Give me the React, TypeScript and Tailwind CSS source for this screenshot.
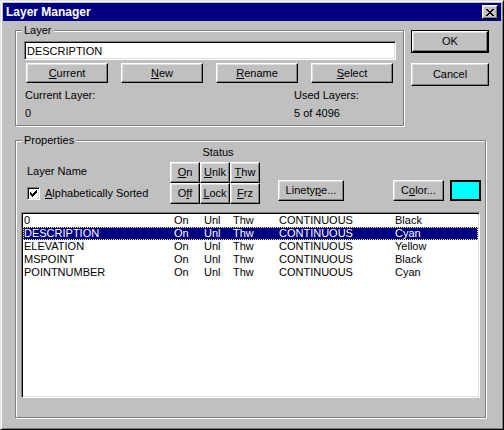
import React from 'react';

const raised =
  'bg-[#c0c0c0] border border-t-white border-l-white border-b-black border-r-black shadow-[inset_-1px_-1px_#808080,inset_1px_1px_#dfdfdf]';
const sunken =
  'border border-t-[#808080] border-l-[#808080] border-b-white border-r-white shadow-[inset_1px_1px_#000,inset_-1px_-1px_#dfdfdf]';
const groupBox =
  'relative border border-[#808080] shadow-[1px_1px_#fff,inset_1px_1px_#fff]';

function Btn({ className, children }: { className: string; children: React.ReactNode }) {
  return (
    <button className={`${raised} flex items-center justify-center ${className}`}>
      {children}
    </button>
  );
}

const layers = [
  { name: '0', color: 'Black' },
  { name: 'DESCRIPTION', color: 'Cyan', selected: true },
  { name: 'ELEVATION', color: 'Yellow' },
  { name: 'MSPOINT', color: 'Black' },
  { name: 'POINTNUMBER', color: 'Cyan' },
];

export default function App() {
  return (
    <div className="w-[504px] h-[430px] bg-[#c0c0c0] border border-t-[#dfdfdf] border-l-[#dfdfdf] border-b-black border-r-black shadow-[inset_1px_1px_#fff,inset_-1px_-1px_#808080] p-[2px] flex flex-col font-['Liberation_Sans',Arial,sans-serif] text-[11px] leading-[13px] text-black select-none">
      {/* Title bar */}
      <div className="h-[18px] bg-[#000080] flex items-center justify-between pl-[3px] pr-[3px]">
        <span className="text-white font-bold text-[12px]">Layer Manager</span>
        <button className={`${raised} w-[16px] h-[14px] flex items-center justify-center`}>
          <svg width="8" height="7" viewBox="0 0 8 7" shapeRendering="crispEdges">
            <path
              fill="#000"
              d="M0 0h2v1H0zM6 0h2v1H6zM1 1h2v1H1zM5 1h2v1H5zM2 2h4v1H2zM3 3h2v1H3zM2 4h4v1H2zM1 5h2v1H1zM5 5h2v1H5zM0 6h2v1H0zM6 6h2v1H6z"
            />
          </svg>
        </button>
      </div>

      <div className="flex flex-col pl-[12px]">
        {/* Top row: Layer group + OK/Cancel */}
        <div className="flex items-start mt-[9px]">
          <div className={`${groupBox} w-[389px] h-[96px] pt-[10px] pl-[8px]`}>
            <span className="absolute left-[6px] top-[-7px] px-[2px] bg-[#c0c0c0]">Layer</span>
            <input
              readOnly
              defaultValue="DESCRIPTION"
              className={`${sunken} bg-white w-[372px] h-[19px] pl-[2px] outline-none text-[11px]`}
            />
            <div className="flex gap-[13px] mt-[3px] ml-[2px]">
              <Btn className="w-[82px] h-[20px]">
                <span><u>C</u>urrent</span>
              </Btn>
              <Btn className="w-[82px] h-[20px]">
                <span><u>N</u>ew</span>
              </Btn>
              <Btn className="w-[82px] h-[20px]">
                <span><u>R</u>ename</span>
              </Btn>
              <Btn className="w-[82px] h-[20px]">
                <span><u>S</u>elect</span>
              </Btn>
            </div>
            <div className="grid grid-cols-[269px_1fr] ml-[1px] mt-[6px] gap-y-[5px]">
              <span>Current Layer:</span>
              <span>Used Layers:</span>
              <span>0</span>
              <span>5 of 4096</span>
            </div>
          </div>

          <div className="flex flex-col ml-[7px] gap-[10px]">
            <div className="w-[78px] h-[23px] border border-black">
              <Btn className="w-full h-full">OK</Btn>
            </div>
            <Btn className="w-[78px] h-[23px]">Cancel</Btn>
          </div>
        </div>

        {/* Properties group */}
        <div className={`${groupBox} w-[471px] h-[278px] mt-[14px]`}>
          <span className="absolute left-[6px] top-[-7px] px-[2px] bg-[#c0c0c0]">Properties</span>

          <div className="flex items-start">
            <div className="w-[143px] ml-[11px] mt-[24px] flex flex-col">
              <span>Layer Name</span>
              <div className="flex items-center gap-[5px] mt-[9px]">
                <div className={`${sunken} bg-white w-[13px] h-[13px] flex items-center justify-center`}>
                  <svg width="7" height="7" viewBox="0 0 7 7" shapeRendering="crispEdges">
                    <path
                      fill="#000"
                      d="M6 0h1v1H6zM5 1h2v1H5zM0 2h1v1H0zM4 2h3v1H4zM0 3h2v1H0zM3 3h3v1H3zM0 4h5v1H0zM1 5h3v1H1zM2 6h1v1H2z"
                    />
                  </svg>
                </div>
                <span><u>A</u>lphabetically Sorted</span>
              </div>
            </div>

            <div className="w-[90px] mt-[5px] flex flex-col">
              <span className="text-center pl-[6px]">Status</span>
              <div className="grid grid-cols-3 mt-[3px]">
                <Btn className="w-[30px] h-[21px]"><span><u>O</u>n</span></Btn>
                <Btn className="w-[30px] h-[21px]"><span><u>U</u>nlk</span></Btn>
                <Btn className="w-[30px] h-[21px]"><span><u>T</u>hw</span></Btn>
                <Btn className="w-[30px] h-[21px]"><span>O<u>f</u>f</span></Btn>
                <Btn className="w-[30px] h-[21px]"><span><u>L</u>ock</span></Btn>
                <Btn className="w-[30px] h-[21px]"><span><u>F</u>rz</span></Btn>
              </div>
            </div>

            <Btn className="w-[66px] h-[21px] ml-[18px] mt-[39px]">
              <span>Linety<u>p</u>e...</span>
            </Btn>
            <Btn className="w-[51px] h-[21px] ml-[49px] mt-[39px]">
              <span>C<u>o</u>lor...</span>
            </Btn>
            <div className="w-[31px] h-[21px] ml-[6px] mt-[39px] border-2 border-black bg-[#00ffff]" />
          </div>

          {/* Layer list */}
          <div className={`${sunken} bg-white w-[459px] h-[186px] ml-[5px] mt-[8px] p-[1px]`}>
            {layers.map((l) => (
              <div
                key={l.name}
                className={
                  l.selected
                    ? 'grid grid-cols-[150px_30px_29px_46px_116px_1fr] h-[13px] leading-[13px] pl-[1px] bg-[#000080] text-white outline-1 outline-dotted outline-[#ffff80] -outline-offset-1'
                    : 'grid grid-cols-[150px_30px_29px_46px_116px_1fr] h-[13px] leading-[13px] pl-[1px]'
                }
              >
                <span>{l.name}</span>
                <span>On</span>
                <span>Unl</span>
                <span>Thw</span>
                <span>CONTINUOUS</span>
                <span>{l.color}</span>
              </div>
            ))}
          </div>
        </div>
      </div>
    </div>
  );
}
